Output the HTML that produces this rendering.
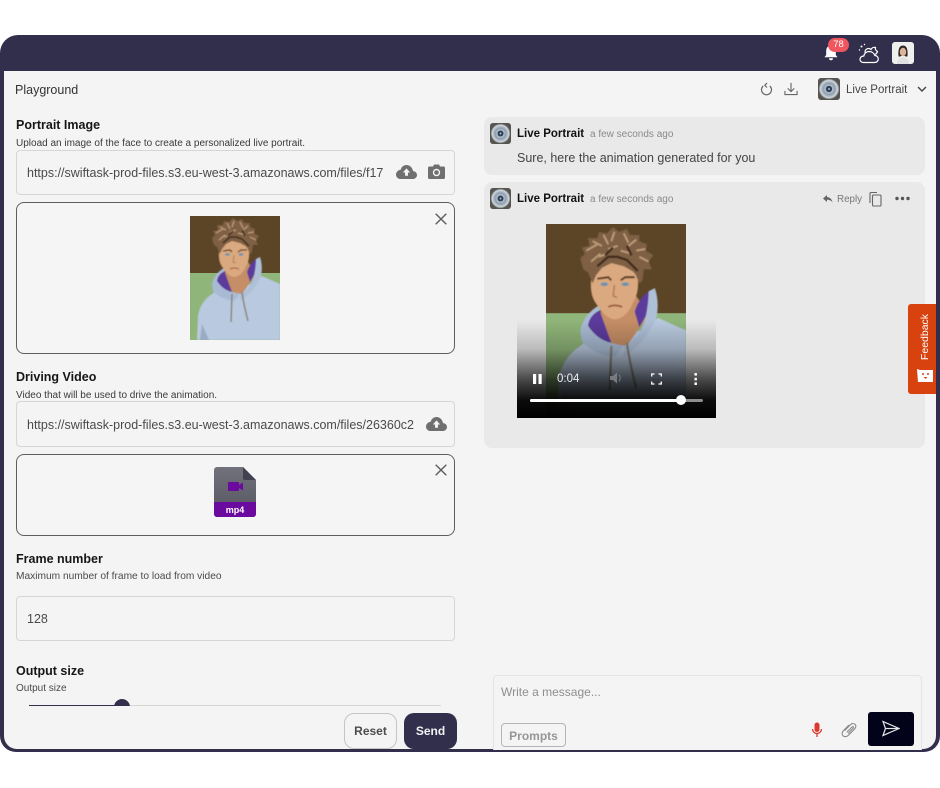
<!DOCTYPE html>
<html><head><meta charset="utf-8">
<style>
html,body{margin:0;padding:0;background:#fff;width:940px;height:788px;overflow:hidden}
body{font-family:"Liberation Sans",sans-serif;color:#222;position:relative}
.a{position:absolute;white-space:nowrap}
.frame{left:0;top:35px;width:940px;height:717px;background:#322f4d;border-radius:18px 18px 16px 16px}
.inner{left:4px;top:71px;width:932px;height:678px;background:#f4f4f4;border-radius:0 0 13px 13px;overflow:hidden}
.lb{left:16px;font-size:12.500px;font-weight:700;color:#161616;line-height:16px}
.sub{left:16px;font-size:10px;color:#3a3a3a;line-height:12px}
.inp{left:16px;width:437px;background:#f4f4f4;border:1px solid #d6d6d6;border-radius:4px;box-sizing:content-box}
.url{left:27px;font-size:12.500px;color:#4a4a4a;line-height:16px}
.pv{left:16px;width:437px;border:1px solid #5f5f5f;border-radius:8px;background:#f5f5f5}
.card{left:484px;width:441px;background:#e9e9e9;border-radius:8px}
.nm{left:517px;font-size:11.500px;font-weight:700;color:#111;line-height:14px}
.tm{left:590px;font-size:10px;color:#8a8a8a;line-height:12px}
</style></head><body>
<svg width="0" height="0" style="position:absolute"><defs>
<filter id="bl"><feGaussianBlur stdDeviation="0.4"/></filter>
<radialGradient id="lens" cx="50%" cy="50%" r="50%"><stop offset="0" stop-color="#2c3e55"/><stop offset=".22" stop-color="#33475f"/><stop offset=".3" stop-color="#c2ccd6"/><stop offset=".55" stop-color="#8d9cad"/><stop offset=".85" stop-color="#cfd6dd"/><stop offset="1" stop-color="#6f6f6c"/></radialGradient>
<linearGradient id="fg" x1="0" y1="0" x2="0" y2="1"><stop offset="0" stop-color="#72727c"/><stop offset="1" stop-color="#55555f"/></linearGradient>
<linearGradient id="vg" x1="0" y1="0" x2="0" y2="1"><stop offset="0" stop-color="#000" stop-opacity="0"/><stop offset=".3" stop-color="#000" stop-opacity=".2"/><stop offset=".6" stop-color="#000" stop-opacity=".68"/><stop offset=".82" stop-color="#000" stop-opacity=".95"/><stop offset="1" stop-color="#000"/></linearGradient>
<symbol id="boy" viewBox="0 0 90 124" preserveAspectRatio="none">
<rect width="90" height="124" fill="#5b4526"/>
<rect y="57" width="90" height="67" fill="#90b57a"/>
<g filter="url(#bl)">
<path d="M7 124L8 100Q10 86 22 78L30 72 62 68 72 60 90 68V124Z" fill="#b9c9df"/>
<path d="M10 124L12 108 19 124Z" fill="#9aabc4"/>
<path d="M34 48L38 76 52 78 66 58 58 46Z" fill="#c58e66"/>
<path d="M25 64Q29 56 34 54L42 76Q31 74 25 64Z" fill="#5c3a9c"/>
<path d="M57 56Q60 46 68 42L68 52 60 66Z" fill="#5c3a9c"/>
<path d="M22 68Q24 58 34 52L35 55Q28 58 27 65 33 74 42 76L50 78 44 85Q30 83 23 75Z" fill="#a9bbd4"/>
<path d="M50 78Q60 74 64 60 66 50 66 43L70 41Q73 50 71 60 64 76 50 85Z" fill="#aebfd8"/>
<path d="M29 36Q28 46 33 52 38 60 44 61 52 60 56 50 60 44 59 34 52 24 40 24 32 26 29 36Z" fill="#dba97f"/>
<path d="M33 35l7-1 2 2M48 36l3-2 6 0" stroke="#5e4028" stroke-width="1.300" fill="none"/>
<ellipse cx="37.500" cy="38.500" rx="2.400" ry="1.200" fill="#6a93b0"/><ellipse cx="51" cy="38.500" rx="2.400" ry="1.200" fill="#6a93b0"/>
<path d="M44 39l-.8 7 2.500 1" stroke="#b67c58" stroke-width="1" fill="none"/>
<path d="M40 53Q44 51 49 53" stroke="#96583f" stroke-width="1.100" fill="none"/>
<path d="M22 22L25 19 23 15 28 14 27 9 33 9 34 5 39 6 43 2 47 5 52 3 54 7 60 7 60 11 65 13 64 17 69 20 66 24 68 29 63 29 62 36 60 38 57 31 50 27 42 25 36 28 32 33 30 38 27 31 24 29Z" fill="#7f6044"/>
<path d="M26 17l7-4M30 11l6 3M37 7l3 6M44 5l-2 6M50 6l3 6M58 10l-5 4M64 16l-6 1M66 24l-6-3M29 24l6-5M40 16l6-2M48 17l7 2M34 21l5-2" stroke="#bd9c78" stroke-width="1.200" fill="none"/>
<path d="M33 27l7-6 6 0 6 2 7 7M43 15l-5 5M52 14l3 6" stroke="#3f2b1b" stroke-width="1.500" fill="none"/>
<path d="M42 78L41 106M52 76Q54 90 58 105" stroke="#86806f" stroke-width="1.400" fill="none"/>
</g></symbol>
<symbol id="logo" viewBox="0 0 22 22">
<rect width="22" height="22" rx="3" fill="#55544f"/>
<circle cx="11" cy="11" r="10.200" fill="url(#lens)"/>
<circle cx="11" cy="11" r="3.200" fill="#2c4059"/><circle cx="11" cy="11" r="1" fill="#a9b6c4"/>
</symbol>
<symbol id="cloud" viewBox="0 0 24 16"><path d="M12 0C8.700 0 6.100 2.300 5.500 5.300 2.300 5.700 0 8.200 0 11.100 0 13.800 2.400 16 5.300 16H19C21.700 16 24 14 24 11.500 24 9 22 7.200 19.500 7 18.800 3 15.700 0 12 0Z" fill="#6f6f6f"/><path d="M12 3.800L7.800 8.600H10.300V12.300H13.700V8.600H16.200Z" fill="#f4f4f4"/></symbol>
<symbol id="x" viewBox="0 0 12 12"><path d="M.7.700L11.300 11.300M11.300.700L.7 11.300" stroke="#5c5c5c" stroke-width="1.400" fill="none"/></symbol>
</defs></svg>

<div class="a frame"></div>

<!-- top bar icons -->
<svg class="a" style="left:822px;top:42px" width="18" height="20" viewBox="0 0 18 20"><path d="M9 3.500C5.800 3.500 4.200 6 4.200 9V13L2.500 15.200H15.500L13.800 13V9C13.800 6 12.200 3.500 9 3.500Z" fill="#fff"/><path d="M7 16.200a2 2 0 0 0 4 0Z" fill="#fff"/></svg>
<div class="a" style="left:828px;top:38px;width:21px;height:14px;border-radius:7px;background:#f0565e;color:#fff;font-size:9.500px;line-height:14px;text-align:center">78</div>
<svg class="a" style="left:858px;top:43px" width="22" height="21" viewBox="0 0 22 21" fill="none" stroke="#fff" stroke-width="1.200"><path d="M5.500 19.500H16.500C18.700 19.500 20.300 18 20.300 16 20.300 14 18.700 12.500 16.800 12.500 16 10 13.700 8.500 11.200 8.500 8.300 8.500 6.200 10.500 5.800 13 3.700 13 2 14.300 2 16.200 2 18.100 3.500 19.500 5.500 19.500Z"/><path d="M7 9.500C6.700 7.500 8.300 5.500 10.500 5.500 11.500 5.500 12.300 5.800 13 6.500 14 4.500 16 4 17.500 4.500 17 5.500 17.500 7.500 19.500 8.500 19 10 18 11 17 11.500"/><circle cx="3.500" cy="3.500" r="1" fill="#fff" stroke="none"/><circle cx="6.500" cy="1.500" r=".7" fill="#fff" stroke="none"/><circle cx="1.500" cy="7" r=".7" fill="#fff" stroke="none"/></svg>
<svg class="a" style="left:892px;top:42px" width="22" height="22" viewBox="0 0 22 22"><rect width="22" height="22" rx="3" fill="#efefee"/><path d="M5 22C5 17 8 15.500 11 15.500S17 17 17 22Z" fill="#e0e0e2"/><path d="M6.500 14C6 8 7 3.500 11 3.500S16 8 15.500 14C15 15.500 13 14 13 14H9C9 14 7 15.500 6.500 14Z" fill="#2f2522"/><ellipse cx="11" cy="10" rx="3.200" ry="4.200" fill="#dcb49c"/></svg>

<div class="a inner"></div>

<div class="a" style="left:15px;top:82px;font-size:12.500px;line-height:16px;color:#333">Playground</div>

<!-- header right -->
<svg class="a" style="left:759px;top:82px" width="15" height="15" viewBox="0 0 15 15" fill="none" stroke="#666" stroke-width="1.200"><path d="M4.200 4A5 5 0 1 0 10.800 4"/><path d="M8 1L5.800 3.300 8 5.500"/></svg>
<svg class="a" style="left:784px;top:82px" width="14" height="14" viewBox="0 0 15 15" fill="none" stroke="#666" stroke-width="1.200"><path d="M1 9.500V13.500H14V9.500"/><path d="M7.500 1V10M4 6.800L7.500 10.300 11 6.800"/></svg>
<svg class="a" style="left:818px;top:78px" width="22" height="22"><use href="#logo"/></svg>
<div class="a" style="left:846px;top:82px;font-size:11.500px;line-height:16px;color:#444">Live Portrait</div>
<svg class="a" style="left:917px;top:86px" width="10" height="7" viewBox="0 0 10 7" fill="none" stroke="#444" stroke-width="1.400"><path d="M1 1L5 5 9 1"/></svg>

<!-- Portrait -->
<div class="a lb" style="top:117px">Portrait Image</div>
<div class="a sub" style="top:138px">Upload an image of the face to create a personalized live portrait.</div>
<div class="a inp" style="top:150px;height:43px"></div>
<div class="a url" style="top:165px">https://swiftask-prod-files.s3.eu-west-3.amazonaws.com/files/f17</div>
<svg class="a" style="left:396px;top:165px" width="21" height="14"><use href="#cloud"/></svg>
<svg class="a" style="left:428px;top:164px" width="17" height="15" viewBox="0 0 17 15"><path d="M1.500 2.500H5L6 .5H11L12 2.500H15.500A1.500 1.500 0 0 1 17 4V13.500A1.500 1.500 0 0 1 15.500 15H1.500A1.500 1.500 0 0 1 0 13.500V4A1.500 1.500 0 0 1 1.500 2.500Z" fill="#6f6f6f"/><circle cx="8.500" cy="8.500" r="3.700" fill="#f4f4f4"/><circle cx="8.500" cy="8.500" r="2.300" fill="#6f6f6f"/></svg>
<div class="a pv" style="top:202px;height:150px"></div>
<svg class="a" style="left:190px;top:216px" width="90" height="124"><use href="#boy" width="90" height="124"/></svg>
<svg class="a" style="left:435px;top:213px" width="12" height="12"><use href="#x"/></svg>

<!-- Driving -->
<div class="a lb" style="top:369px">Driving Video</div>
<div class="a sub" style="top:390px">Video that will be used to drive the animation.</div>
<div class="a inp" style="top:401px;height:44px"></div>
<div class="a url" style="top:417px">https://swiftask-prod-files.s3.eu-west-3.amazonaws.com/files/26360c2</div>
<svg class="a" style="left:426px;top:417px" width="21" height="14"><use href="#cloud"/></svg>
<div class="a pv" style="top:454px;height:80px"></div>
<svg class="a" style="left:214px;top:467px" width="42" height="50" viewBox="0 0 42 50"><path d="M3 0H29L42 13V47A3 3 0 0 1 39 50H3A3 3 0 0 1 0 47V3A3 3 0 0 1 3 0Z" fill="url(#fg)"/><path d="M29 0L42 13H31A2 2 0 0 1 29 11Z" fill="#41414f"/><path d="M0 35H42V47A3 3 0 0 1 39 50H3A3 3 0 0 1 0 47Z" fill="#6b0a9e"/><rect x="14" y="15" width="11" height="9" rx="1" fill="#6b0a9e"/><path d="M25 18L29 15.500V23.500L25 21Z" fill="#6b0a9e"/><text x="21" y="46" text-anchor="middle" font-family="Liberation Sans" font-size="9" font-weight="700" fill="#fff">mp4</text></svg>
<svg class="a" style="left:435px;top:464px" width="12" height="12"><use href="#x"/></svg>

<!-- Frame number -->
<div class="a lb" style="top:551px">Frame number</div>
<div class="a sub" style="top:571px;font-size:10.200px;color:#4a4a4a">Maximum number of frame to load from video</div>
<div class="a inp" style="top:596px;height:43px"></div>
<div class="a url" style="top:611px">128</div>

<!-- Output size -->
<div class="a lb" style="top:663px">Output size</div>
<div class="a sub" style="top:683px;color:#4a4a4a">Output size</div>
<div class="a" style="left:29px;top:705px;width:412px;height:1px;background:#d6d6d6"></div>
<div class="a" style="left:29px;top:705px;width:93px;height:1px;background:#322f4d"></div>
<div class="a" style="left:114px;top:699px;width:16px;height:7px;overflow:hidden"><div style="width:16px;height:16px;border-radius:50%;background:#322f4d"></div></div>

<!-- buttons -->
<div class="a" style="left:344px;top:713px;width:51px;height:34px;border:1px solid #c4c4c4;border-radius:10px;text-align:center;font-size:12px;font-weight:700;line-height:35px;color:#4c4c4c;background:#f4f4f4">Reset</div>
<div class="a" style="left:404px;top:713px;width:53px;height:36px;border-radius:10px;background:#322f4d;text-align:center;font-size:12px;font-weight:700;line-height:37px;color:#f2f2f2">Send</div>

<!-- messages -->
<div class="a card" style="top:117px;height:58px"></div>
<svg class="a" style="left:490px;top:123px" width="21" height="21"><use href="#logo"/></svg>
<div class="a nm" style="top:127px">Live Portrait</div>
<div class="a tm" style="top:129px">a few seconds ago</div>
<div class="a" style="left:517px;top:150px;font-size:12.500px;line-height:16px;color:#444">Sure, here the animation generated for you</div>

<div class="a card" style="top:182px;height:266px"></div>
<svg class="a" style="left:490px;top:188px" width="21" height="21"><use href="#logo"/></svg>
<div class="a nm" style="top:192px">Live Portrait</div>
<div class="a tm" style="top:194px">a few seconds ago</div>
<svg class="a" style="left:823px;top:195px" width="10" height="8" viewBox="0 0 10 8"><path d="M4 0L0 3.500 4 7V4.800C6.500 4.800 8.200 5.500 9.500 7.500 9 4.500 7.200 2.300 4 2Z" fill="#666"/></svg>
<div class="a" style="left:837px;top:193px;font-size:9.800px;line-height:13px;color:#777">Reply</div>
<svg class="a" style="left:869px;top:192px" width="13" height="15" viewBox="0 0 13 15" fill="none" stroke="#666" stroke-width="1.100"><path d="M1 11V1.500A1 1 0 0 1 2 .5H8"/><rect x="3.500" y="3" width="8.500" height="11" rx="1"/></svg>
<svg class="a" style="left:895px;top:196px" width="15" height="5" viewBox="0 0 15 5" fill="#555"><circle cx="2" cy="2.500" r="1.700"/><circle cx="7.500" cy="2.500" r="1.700"/><circle cx="13" cy="2.500" r="1.700"/></svg>

<!-- video -->
<svg class="a" style="left:546px;top:224px" width="140" height="194"><use href="#boy" width="140" height="194"/></svg>
<svg class="a" style="left:517px;top:320px" width="199" height="98"><rect width="199" height="98" fill="url(#vg)"/></svg>
<svg class="a" style="left:532px;top:373px" width="11" height="12" fill="#fff"><rect x="1" y="1" width="3.200" height="10"/><rect x="6.500" y="1" width="3.200" height="10"/></svg>
<div class="a" style="left:557px;top:372px;font-size:11.500px;line-height:14px;color:#eee">0:04</div>
<svg class="a" style="left:609px;top:371px" width="14" height="14" viewBox="0 0 14 14" fill="#8a8f96" opacity=".75"><path d="M1 5H4L8 1.500V12.500L4 9H1Z"/><path d="M10 3.500Q12.500 7 10 10.500" stroke="#8a8f96" fill="none"/></svg>
<svg class="a" style="left:651px;top:373px" width="11" height="12" viewBox="0 0 11 12" fill="none" stroke="#fff" stroke-width="1.300"><path d="M.7 3.500V1H3.500M7.500 1H10.300V3.500M10.300 8.500V11H7.500M3.500 11H.7V8.500"/></svg>
<svg class="a" style="left:693px;top:372px" width="6" height="14" fill="#fff"><rect x="1.500" y="1" width="2.400" height="2.600"/><rect x="1.500" y="5.800" width="2.400" height="2.600"/><rect x="1.500" y="10.400" width="2.400" height="2.600"/></svg>
<div class="a" style="left:530px;top:399px;width:173px;height:3px;border-radius:2px;background:#8e8e8e"></div>
<div class="a" style="left:530px;top:399px;width:151px;height:3px;border-radius:2px;background:#fff"></div>
<div class="a" style="left:676px;top:395px;width:10px;height:10px;border-radius:50%;background:#fff"></div>

<!-- feedback -->
<div class="a" style="left:908px;top:304px;width:28px;height:90px;background:#d8420f;border-radius:3px 0 0 3px"></div>
<div class="a" style="left:925px;top:337px;font-size:10.500px;line-height:12px;color:#fff;transform:translate(-50%,-50%) rotate(-90deg)">Feedback</div>
<svg class="a" style="left:917px;top:369px" width="16" height="13" viewBox="0 0 16 13"><path d="M0 0L3 1H16V13H1Z" fill="#fff"/><circle cx="6" cy="5" r="1" fill="#d8420f"/><circle cx="11" cy="5" r="1" fill="#d8420f"/><path d="M6.500 8H10.500L8.500 10Z" fill="#d8420f"/></svg>

<!-- composer -->
<div class="a" style="left:493px;top:675px;width:427px;height:74px;border:1px solid #e4e4e4;border-bottom:0;border-radius:4px 4px 0 0;background:#f4f4f4"></div>
<div class="a" style="left:501px;top:684px;font-size:12px;line-height:16px;color:#8e8e8e">Write a message...</div>
<div class="a" style="left:501px;top:723px;width:63px;height:22px;border:1px solid #b5b5b5;border-radius:4px;text-align:center;font-size:12px;font-weight:700;line-height:24px;color:#969696">Prompts</div>
<svg class="a" style="left:811px;top:722px" width="12" height="16" viewBox="0 0 12 16"><rect x="3.500" y="0.500" width="5" height="9.500" rx="2.500" fill="#dc3a2e"/><path d="M1.500 7A4.500 4.500 0 0 0 10.500 7M6 11.500V15" stroke="#dc3a2e" stroke-width="1.300" fill="none"/></svg>
<svg class="a" style="left:841px;top:722px" width="16" height="16" viewBox="0 0 16 16" fill="none" stroke="#8a8a8a" stroke-width="1.100"><path d="M3.800 8.500L9.500 2.600C11 1.200 13.200 1.400 14.200 2.500 15.200 3.700 15 5.600 13.700 6.900L7.300 13.400C5.700 15 3.200 15 1.900 13.700 .7 12.300 .9 10.200 2.400 8.700L8 3"/><path d="M5.800 10.300L11 5C11.900 4.200 13 5.200 12.200 6.200L7 11.500"/></svg>
<div class="a" style="left:868px;top:712px;width:46px;height:34px;background:#02021a;border-radius:3px"></div>
<svg class="a" style="left:882px;top:720px" width="18" height="17" viewBox="0 0 18 17" fill="none" stroke="#e8e8e8" stroke-width="1.200"><path d="M1 1.500L17 8.500 1 15.500 3.500 8.500Z"/><path d="M3.500 8.500H17"/></svg>
</body></html>
